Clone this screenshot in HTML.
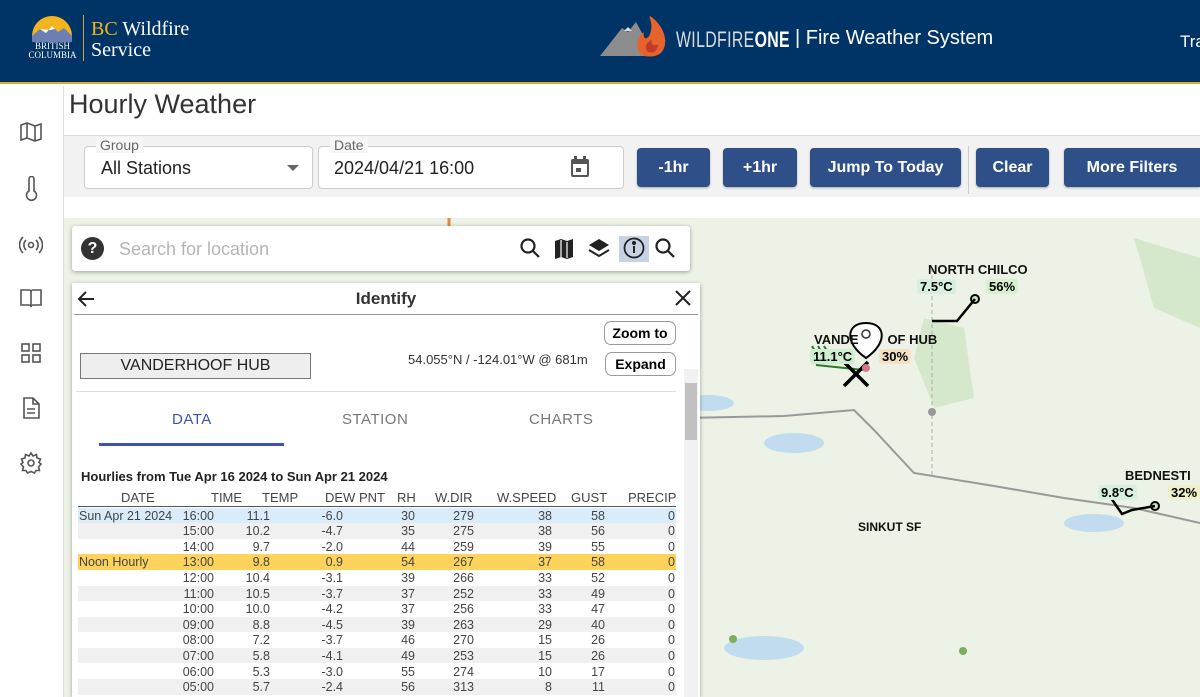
<!DOCTYPE html>
<html><head><meta charset="utf-8"><style>
*{box-sizing:border-box;margin:0;padding:0}
body{width:1200px;height:697px;overflow:hidden;font-family:"Liberation Sans",sans-serif;background:#fff;position:relative}
.abs{position:absolute}
.hdr{left:0;top:0;width:1200px;height:84px;background:#003366;border-bottom:2px solid #e3a82b}
.btn{position:absolute;top:148px;height:39px;background:#2e4f87;color:#fff;font-weight:bold;font-size:16px;border-radius:4px;display:flex;align-items:center;justify-content:center;box-shadow:0 1px 2px rgba(0,0,0,.3)}
.side svg{position:absolute;left:19px}
.tbl div{position:absolute;font-size:12.5px;color:#444;white-space:nowrap}
.lbl{position:absolute;font-weight:bold;font-size:13px;color:#111}
.pill{position:absolute;font-weight:bold;font-size:13px;padding:0 3px;border-radius:3px}
</style></head><body>
<div class="abs hdr">
 <svg class="abs" style="left:30px;top:14px" width="44" height="30" viewBox="0 0 44 30">
  <path d="M2 22 A20 20 0 0 1 42 22 Z" fill="#f3b51b"/>
  <path d="M2 22 L10 15 L16 19 L22 12 L28 18 L34 14 L42 22 L42 28 L2 28Z" fill="#6c7fb5"/>
  <path d="M10 15 L13 17 L16 19 L22 12 L25 15 L20 16Z" fill="#fff"/>
 </svg>
 <div class="abs" style="left:25px;top:42px;color:#fff;font-family:'Liberation Serif',serif;font-size:9px;line-height:9px;text-align:center;width:55px">BRITISH<br>COLUMBIA</div>
 <div class="abs" style="left:83px;top:15px;width:1px;height:46px;background:#c9a640"></div>
 <div class="abs" style="left:91px;top:19px;font-family:'Liberation Serif',serif;font-size:20px;line-height:21px;color:#fff"><span style="color:#f3b51b">BC</span> Wildfire<br>Service</div>
 <svg class="abs" style="left:598px;top:14px" width="70" height="46" viewBox="0 0 70 46">
  <path d="M2 42 L24 14 L30 18 L38 8 L50 30 L50 42Z" fill="#8c8c8c"/>
  <path d="M26 17 L30 13 L34 17Z" fill="#ddd"/>
  <path d="M46 42 C36 36 38 24 46 18 C44 26 50 26 52 20 C56 8 50 4 52 2 C64 10 70 24 66 34 C64 40 58 44 46 42Z" fill="#e8632b"/>
  <path d="M50 38 C46 34 48 28 54 26 C52 32 58 32 60 30 C60 36 56 40 50 38Z" fill="#c23b28"/>
 </svg>
 <div class="abs" style="left:676px;top:27px;color:#ddd;font-size:22px;letter-spacing:0.5px;transform:scaleX(.72);transform-origin:left">WILDFIRE<b style="color:#fff">ONE</b></div>
 <div class="abs" style="left:795px;top:27px;color:#fff;font-size:20px">| Fire Weather System</div>
 <div class="abs" style="left:1180px;top:32px;color:#fff;font-size:17px">Tra</div>
</div>
<div class="abs side" style="left:0;top:86px;width:64px;height:611px;border-right:1px solid #ddd;background:#fff">
 <svg style="top:34px" width="24" height="24" viewBox="0 0 24 24" fill="none" stroke="#555" stroke-width="1.6"><path d="M2 5 L8 3 L16 6 L22 4 V19 L16 21 L8 18 L2 20Z M8 3 V18 M16 6 V21"/></svg>
 <svg style="top:90px" width="24" height="26" viewBox="0 0 24 26" fill="none" stroke="#555" stroke-width="1.6"><path d="M10 3 a2.5 2.5 0 0 1 5 0 V15 a5 5 0 1 1 -5 0Z"/></svg>
 <svg style="top:147px" width="24" height="24" viewBox="0 0 24 24" fill="none" stroke="#555" stroke-width="1.6"><circle cx="12" cy="12" r="2.5"/><path d="M7 7 a7 7 0 0 0 0 10 M17 7 a7 7 0 0 1 0 10 M4 4 a11 11 0 0 0 0 16 M20 4 a11 11 0 0 1 0 16"/></svg>
 <svg style="top:200px" width="24" height="24" viewBox="0 0 24 24" fill="none" stroke="#555" stroke-width="1.6"><path d="M2 4 H10 a2 2 0 0 1 2 2 V21 a2 2 0 0 0 -2 -2 H2Z M22 4 H14 a2 2 0 0 0 -2 2 V21 a2 2 0 0 1 2 -2 H22Z"/></svg>
 <svg style="top:255px" width="24" height="24" viewBox="0 0 24 24" fill="none" stroke="#555" stroke-width="1.6"><rect x="3" y="3" width="7" height="7"/><rect x="14" y="3" width="7" height="7"/><rect x="3" y="14" width="7" height="7"/><rect x="14" y="14" width="7" height="7"/></svg>
 <svg style="top:310px" width="24" height="24" viewBox="0 0 24 24" fill="none" stroke="#555" stroke-width="1.6"><path d="M5 2 H14 L20 8 V22 H5Z M14 2 V8 H20 M8 13 H16 M8 17 H16"/></svg>
 <svg style="top:365px" width="24" height="24" viewBox="0 0 24 24" fill="none" stroke="#555" stroke-width="1.6"><circle cx="12" cy="12" r="3"/><path d="M12 2 L14 5 L17.5 3.5 L18 7 L21.5 8 L20 11.5 L22 13 L19.5 16 L20.5 19.5 L17 19.5 L15.5 22 L12 20.5 L8.5 22 L7 19.5 L3.5 19.5 L4.5 16 L2 13 L4 11.5 L2.5 8 L6 7 L6.5 3.5 L10 5Z"/></svg>
</div>
<div class="abs" style="left:69px;top:89px;font-size:27px;color:#333">Hourly Weather</div>
<div class="abs" style="left:64px;top:135px;width:1136px;height:62px;background:#f2f2f2;border-top:1px solid #ddd"></div>
<div class="abs" style="left:84px;top:146px;width:229px;height:43px;background:#fff;border:1px solid #ccc;border-radius:4px"></div>
<div class="abs" style="left:96px;top:137px;font-size:14px;color:#666;background:#f6f6f6;padding:0 4px">Group</div>
<div class="abs" style="left:101px;top:158px;font-size:18px;color:#222">All Stations</div>
<div class="abs" style="left:287px;top:165px;width:0;height:0;border-left:6px solid transparent;border-right:6px solid transparent;border-top:6px solid #666"></div>
<div class="abs" style="left:318px;top:146px;width:306px;height:43px;background:#fff;border:1px solid #ccc;border-radius:4px"></div>
<div class="abs" style="left:330px;top:137px;font-size:14px;color:#666;background:#f6f6f6;padding:0 4px">Date</div>
<div class="abs" style="left:334px;top:158px;font-size:18px;color:#222">2024/04/21 16:00</div>
<svg class="abs" style="left:569px;top:155px" width="22" height="24" viewBox="0 0 22 24"><rect x="2" y="4" width="18" height="18" rx="2" fill="#555"/><rect x="4" y="9" width="14" height="11" fill="#fff"/><rect x="5" y="1" width="3" height="5" fill="#555"/><rect x="14" y="1" width="3" height="5" fill="#555"/><rect x="7" y="13" width="5" height="4" fill="#555"/></svg>
<div class="btn" style="left:637px;width:73px">-1hr</div>
<div class="btn" style="left:723px;width:74px">+1hr</div>
<div class="btn" style="left:810px;width:151px">Jump To Today</div>
<div class="abs" style="left:968px;top:146px;width:1px;height:48px;background:#ccc"></div>
<div class="btn" style="left:976px;width:73px">Clear</div>
<div class="btn" style="left:1064px;width:136px;border-radius:4px 0 0 4px">More Filters</div>
<div class="abs" style="left:64px;top:218px;width:1136px;height:479px;background:#edf2e6;overflow:hidden">
 <svg width="1136" height="479" style="position:absolute;left:0;top:0">
  <path d="M860 100 L900 110 L910 180 L870 190 L850 140Z" fill="#d6e8cc"/>
  <path d="M1070 20 L1136 40 L1136 110 L1090 90Z" fill="#d6e8cc"/>
  <ellipse cx="730" cy="225" rx="30" ry="10" fill="#c2dcef"/>
  <ellipse cx="645" cy="185" rx="25" ry="8" fill="#c2dcef"/>
  <ellipse cx="1030" cy="305" rx="30" ry="9" fill="#c2dcef"/>
  <ellipse cx="700" cy="430" rx="40" ry="12" fill="#c2dcef"/>
  <path d="M620 200 L720 198 L790 192 L810 212 L850 255 L930 268 L1000 280 L1070 290 L1136 305" stroke="#999" stroke-width="2" fill="none"/>
  <path d="M868 50 V260" stroke="#aaa" stroke-width="1" stroke-dasharray="4 3"/>
  <circle cx="911" cy="81" r="4" fill="#c8f0c8" stroke="#000" stroke-width="2"/>
  <path d="M911 81 L893 103 L868 103" stroke="#000" stroke-width="2.5" fill="none"/>
  <circle cx="1091" cy="288" r="4" fill="#c8f0c8" stroke="#000" stroke-width="2"/>
  <path d="M1091 288 L1068 292 L1058 296 L1047 280" stroke="#000" stroke-width="2.5" fill="none"/>
  <path d="M748 128 L756 142 M754 128 L762 142 M760 128 L768 142" stroke="#2a7a2a" stroke-width="2"/>
  <path d="M752 147 L800 152" stroke="#2a7a2a" stroke-width="2"/>
  <path d="M780 168 L804 144 M780 144 L804 168" stroke="#000" stroke-width="3.5"/>
  <path d="M802 140 C780 125 782 105 802 105 C822 105 824 125 802 140Z" fill="#fff" stroke="#000" stroke-width="2"/>
  <circle cx="802" cy="116" r="4" fill="none" stroke="#333" stroke-width="1.5"/>
  <circle cx="802" cy="150" r="4" fill="#d47a8a"/>
  <circle cx="868" cy="194" r="4" fill="#999"/>
  <circle cx="669" cy="421" r="4" fill="#7cae5c"/>
  <circle cx="899" cy="433" r="4" fill="#7cae5c"/>
  <path d="M385 0 V10" stroke="#e8883a" stroke-width="3"/>
 </svg>
 <div class="lbl" style="left:864px;top:44px">NORTH CHILCO</div>
 <div class="pill" style="left:853px;top:61px;background:#d6f0e0">7.5°C</div>
 <div class="pill" style="left:922px;top:61px;background:#d6f0d0">56%</div>
 <div class="lbl" style="left:750px;top:114px">VANDE<span style="color:transparent">RHO</span>OF HUB</div>
 <div class="pill" style="left:746px;top:131px;background:#cfeecf">11.1°C</div>
 <div class="pill" style="left:815px;top:131px;background:#f5e2c4">30%</div>
 <div class="lbl" style="left:1061px;top:250px">BEDNESTI</div>
 <div class="pill" style="left:1034px;top:267px;background:#d6f0e0">9.8°C</div>
 <div class="pill" style="left:1104px;top:267px;background:#f0f0c8">32%</div>
 <div class="lbl" style="left:794px;top:302px;font-size:12px">SINKUT SF</div>
</div>
<div class="abs" style="left:72px;top:226px;width:618px;height:45px;background:#fff;border-radius:3px;box-shadow:0 1px 4px rgba(0,0,0,.35)">
 <div class="abs" style="left:9px;top:11px;width:23px;height:23px;border-radius:50%;background:#333;color:#fff;font-weight:bold;font-size:16px;text-align:center;line-height:23px">?</div>
 <div class="abs" style="left:47px;top:13px;font-size:18px;color:#b5b5b5">Search for location</div>
 <svg class="abs" style="left:446px;top:10px" width="166" height="26" viewBox="0 0 166 26" fill="none" stroke="#222" stroke-width="2.2">
  <circle cx="10" cy="10" r="6.5"/><path d="M15 15 L21 21"/>
  <path d="M37 5 L43 3 L49 5 L55 3 V21 L49 23 L43 21 L37 23Z" fill="#222" stroke="none"/><path d="M43 4 V21 M49 6 V22" stroke="#fff" stroke-width="1.2"/>
  <path d="M81 3 L91 9 L81 15 L71 9Z" fill="#222" stroke="none"/><path d="M71 14 L81 20 L91 14" stroke-width="2"/>
  <rect x="101" y="-1" width="30" height="28" fill="#c7d3e3" stroke="none"/>
  <circle cx="116" cy="12" r="9.5" stroke-width="1.8"/><path d="M116 10 V17" stroke-width="2"/><circle cx="116" cy="7" r="1" fill="#222"/>
  <circle cx="145" cy="10" r="6.5"/><path d="M150 15 L156 21"/>
 </svg>
</div>
<div class="abs" style="left:72px;top:283px;width:628px;height:414px;background:#fff;box-shadow:0 1px 4px rgba(0,0,0,.35)">
 <svg class="abs" style="left:4px;top:6px" width="20" height="20" viewBox="0 0 20 20" fill="none" stroke="#222" stroke-width="2"><path d="M18 10 H3 M10 3 L3 10 L10 17"/></svg>
 <div class="abs" style="left:0;width:628px;top:6px;text-align:center;font-size:17px;font-weight:bold;color:#333">Identify</div>
 <svg class="abs" style="left:602px;top:6px" width="18" height="18" viewBox="0 0 18 18" stroke="#222" stroke-width="2"><path d="M2 2 L16 16 M16 2 L2 16"/></svg>
 <div class="abs" style="left:2px;top:31px;width:624px;height:1px;background:#999"></div>
 <div class="abs" style="left:532px;top:38px;width:72px;height:24px;border:1px solid #999;border-radius:7px;font-weight:bold;font-size:14px;text-align:center;line-height:22px">Zoom to</div>
 <div class="abs" style="left:533px;top:69px;width:71px;height:24px;border:1px solid #999;border-radius:7px;font-weight:bold;font-size:14px;text-align:center;line-height:22px">Expand</div>
 <div class="abs" style="left:8px;top:70px;width:231px;height:26px;background:#eee;border:1px solid #777;font-size:16px;text-align:center;line-height:24px;color:#222">VANDERHOOF HUB</div>
 <div class="abs" style="left:336px;top:69px;font-size:13px;color:#333">54.055°N / -124.01°W @ 681m</div>
 <div class="abs" style="left:612px;top:86px;width:14px;height:328px;background:#f1f1f1"></div>
 <div class="abs" style="left:613px;top:100px;width:12px;height:57px;background:#c1c1c1"></div>
 <div class="abs" style="left:4px;top:108px;width:600px;height:1px;background:#ddd"></div>
 <div class="abs" style="left:100px;top:128px;font-size:15px;color:#3f51b5;letter-spacing:.5px">DATA</div>
 <div class="abs" style="left:270px;top:128px;font-size:15px;color:#777;letter-spacing:.5px">STATION</div>
 <div class="abs" style="left:457px;top:128px;font-size:15px;color:#777;letter-spacing:.5px">CHARTS</div>
 <div class="abs" style="left:27px;top:160px;width:185px;height:3px;background:#3f51b5"></div>
</div>
<div class="tbl">
 <div style="left:81px;top:469px;font-size:13px;font-weight:bold;color:#222">Hourlies from Tue Apr 16 2024 to Sun Apr 21 2024</div>
 <div style="left:121px;top:490px;font-size:13px">DATE</div>
 <div style="left:211px;top:490px;font-size:13px">TIME</div>
 <div style="left:262px;top:490px;font-size:13px">TEMP</div>
 <div style="left:325px;top:490px;font-size:13px">DEW PNT</div>
 <div style="left:397px;top:490px;font-size:13px">RH</div>
 <div style="left:435px;top:490px;font-size:13px">W.DIR</div>
 <div style="left:497px;top:490px;font-size:13px">W.SPEED</div>
 <div style="left:571px;top:490px;font-size:13px">GUST</div>
 <div style="left:628px;top:490px;font-size:13px">PRECIP</div>
 <div style="left:78px;top:506px;width:598px;height:1px;background:#555"></div>
</div>
<div class="tbl" id="rows"></div>
<script>
var d=[["Sun Apr 21 2024","16:00","11.1","-6.0","30","279","38","58","0","#d9ecfa"],
["","15:00","10.2","-4.7","35","275","38","56","0","#f0f0f0"],
["","14:00","9.7","-2.0","44","259","39","55","0","#fff"],
["Noon Hourly","13:00","9.8","0.9","54","267","37","58","0","#fdd35c"],
["","12:00","10.4","-3.1","39","266","33","52","0","#fff"],
["","11:00","10.5","-3.7","37","252","33","49","0","#f0f0f0"],
["","10:00","10.0","-4.2","37","256","33","47","0","#fff"],
["","09:00","8.8","-4.5","39","263","29","40","0","#f0f0f0"],
["","08:00","7.2","-3.7","46","270","15","26","0","#fff"],
["","07:00","5.8","-4.1","49","253","15","26","0","#f0f0f0"],
["","06:00","5.3","-3.0","55","274","10","17","0","#fff"],
["","05:00","5.7","-2.4","56","313","8","11","0","#f0f0f0"]];
var rx=[0,214,270,343,415,474,552,605,675],h="";
d.forEach(function(r,i){var y=507.5+i*15.6;
h+='<div style="left:78px;top:'+y+'px;width:598px;height:15.6px;background:'+r[9]+'"></div>';
h+='<div style="left:79px;top:'+(y+1)+'px">'+r[0]+'</div>';
for(var k=1;k<9;k++)h+='<div style="left:'+(rx[k]-60)+'px;width:60px;text-align:right;top:'+(y+1)+'px">'+r[k]+'</div>';});
document.getElementById('rows').innerHTML=h;
</script>
</body></html>
